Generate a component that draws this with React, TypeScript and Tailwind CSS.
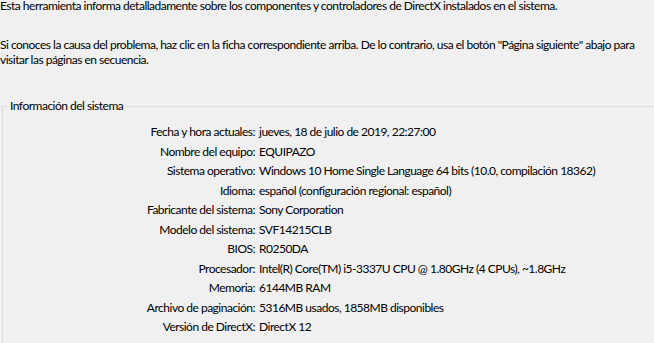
const ROWS: [string, string][] = [
  ["Fecha y hora actuales:", "jueves, 18 de julio de 2019, 22:27:00"],
  ["Nombre del equipo:", "EQUIPAZO"],
  ["Sistema operativo:", "Windows 10 Home Single Language 64 bits (10.0, compilación 18362)"],
  ["Idioma:", "español (configuración regional: español)"],
  ["Fabricante del sistema:", "Sony Corporation"],
  ["Modelo del sistema:", "SVF14215CLB"],
  ["BIOS:", "R0250DA"],
  ["Procesador:", "Intel(R) Core(TM) i5-3337U CPU @ 1.80GHz (4 CPUs), ~1.8GHz"],
  ["Memoria:", "6144MB RAM"],
  ["Archivo de paginación:", "5316MB usados, 1858MB disponibles"],
  ["Versión de DirectX:", "DirectX 12"],
];

export default function App() {
  return (
    <div className="h-[343px] w-[654px] overflow-hidden bg-[#f0f0f0] font-['Lato',sans-serif] text-[12px] tracking-[-0.5px] text-black">
      <p className="whitespace-nowrap leading-[11px]">
        Esta herramienta informa detalladamente sobre los componentes y controladores de DirectX instalados en el sistema.
      </p>
      <p className="mt-[26px] whitespace-nowrap leading-[15px]">
        Si conoces la causa del problema, haz clic en la ficha correspondiente arriba. De lo contrario, usa el botón
        "Página siguiente" abajo para
        <br />
        visitar las páginas en secuencia.
      </p>

      <fieldset className="ml-[2px] mt-[31px] h-[300px] border-l border-t border-[#dcdcdc] pl-[4px]">
        <legend className="pl-[3px] pr-[2px] leading-[16px]">Información del sistema</legend>
        <div className="mt-[8px] grid grid-cols-[248px_1fr] gap-x-[4px]">
          {ROWS.map(([label, value]) => (
            <div key={label} className="contents">
              <span className="whitespace-nowrap text-right leading-[19.5px]">{label}</span>
              <span className="whitespace-nowrap leading-[19.5px]">{value}</span>
            </div>
          ))}
        </div>
      </fieldset>
    </div>
  );
}
